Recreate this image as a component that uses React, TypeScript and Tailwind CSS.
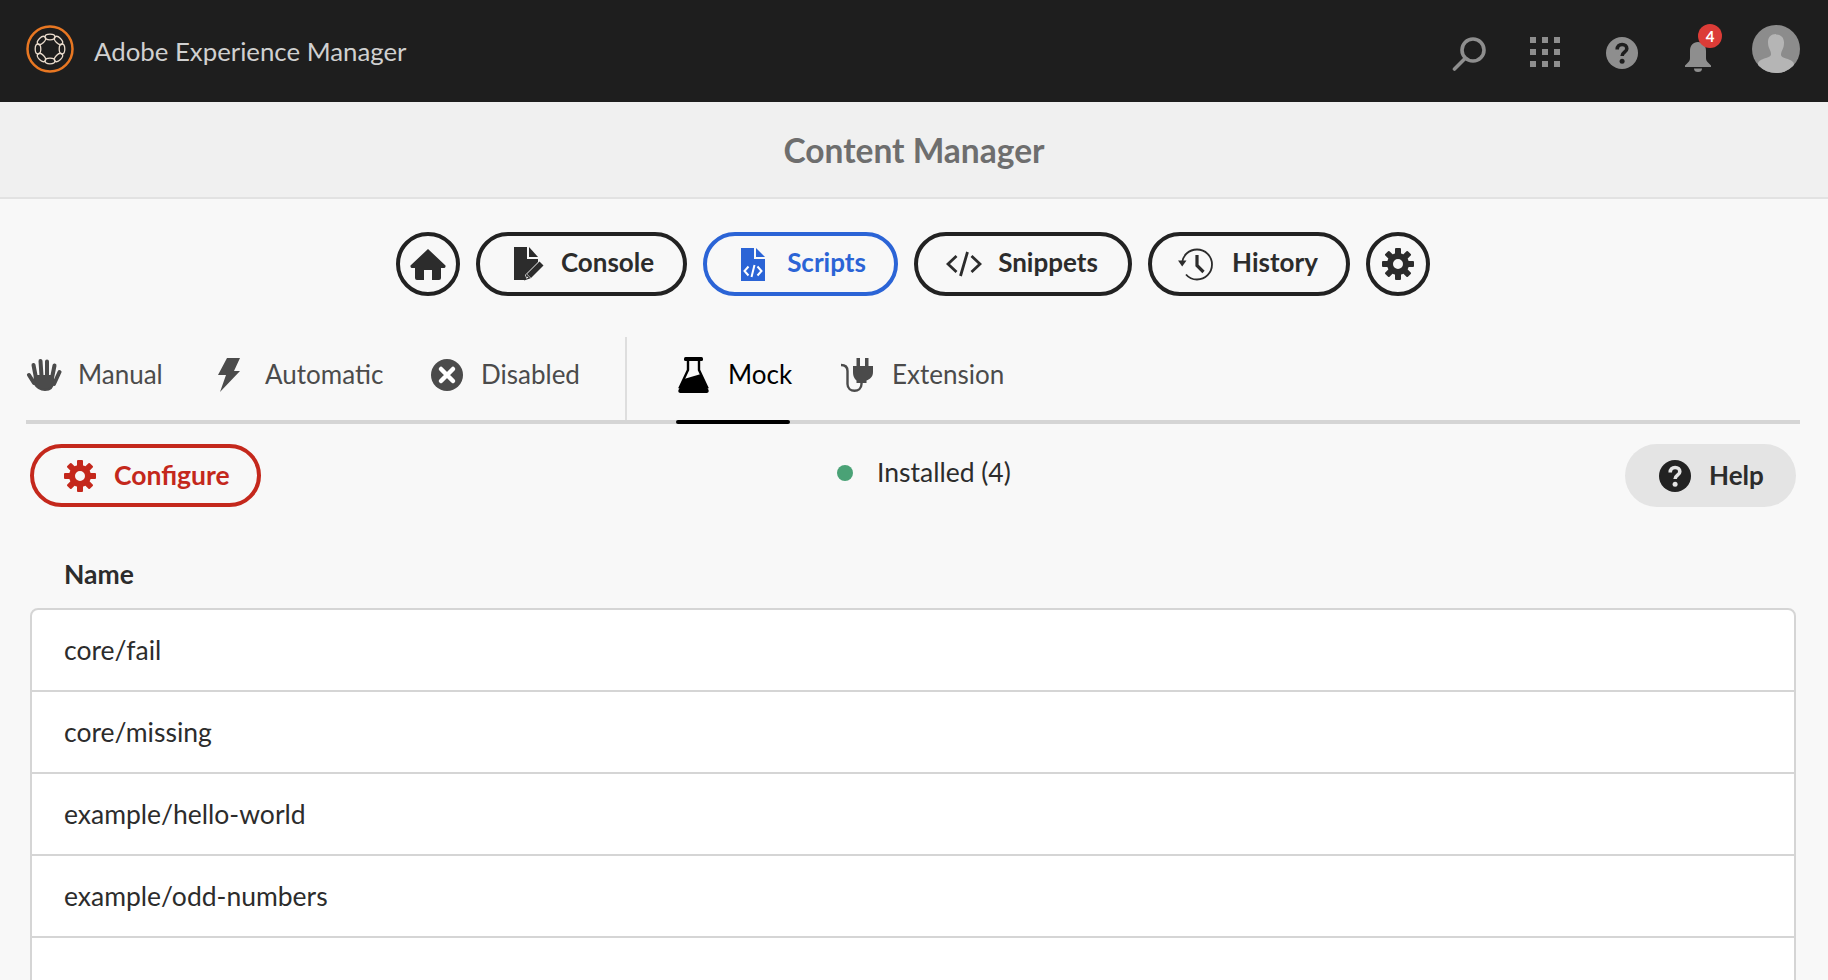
import { ReactNode } from "react";

const rows = ["core/fail", "core/missing", "example/hello-world", "example/odd-numbers", ""];

const Gear = ({ className = "" }: { className?: string }) => (
  <svg viewBox="0 0 32 32" className={className} fill="currentColor">
    <path fillRule="evenodd" d="M16 5a11 11 0 1 0 0 22 11 11 0 0 0 0-22zm0 6a5 5 0 1 1 0 10 5 5 0 0 1 0-10z" />
    {[0, 45, 90, 135, 180, 225, 270, 315].map((a) => (
      <rect key={a} x="13" y="0" width="6" height="7" rx="1" transform={`rotate(${a} 16 16)`} />
    ))}
  </svg>
);

const Logo = () => (
  <svg viewBox="0 0 48 48" className="w-12 h-12" fill="none">
    <circle cx="24" cy="24" r="22.5" stroke="#e87722" strokeWidth="2.5" />
    {[0, 45, 90, 135, 180, 225, 270, 315].map((a) => (
      <ellipse key={a} cx="24" cy="12" rx="5" ry="2.8" stroke="#eadccd" strokeWidth="1.3" transform={`rotate(${a} 24 24)`} />
    ))}
  </svg>
);

const Search = () => (
  <svg viewBox="0 0 34 34" className="w-[34px] h-[34px]" fill="none" stroke="#8e8e8e" strokeWidth="3.6" strokeLinecap="round">
    <circle cx="21" cy="13" r="11" />
    <path d="M13 21.5L2.5 32" />
  </svg>
);

const Apps = () => (
  <svg viewBox="0 0 30 30" className="w-[30px] h-[30px]" fill="#8e8e8e">
    {[0, 12, 24].flatMap((y) => [0, 12, 24].map((x) => <rect key={`${x}-${y}`} x={x} y={y} width="6" height="6" />))}
  </svg>
);

const HelpIcon = ({ bg, fg, className }: { bg: string; fg: string; className: string }) => (
  <svg viewBox="0 0 32 32" className={className}>
    <circle cx="16" cy="16" r="16" fill={bg} />
    <path d="M11.2 12.4c0-3 2-4.9 4.9-4.9 2.8 0 4.7 1.7 4.7 4.2 0 3.4-4.7 3.6-4.7 7.2" fill="none" stroke={fg} strokeWidth="3.6" />
    <circle cx="16.1" cy="24.2" r="2.5" fill={fg} />
  </svg>
);

const Bell = () => (
  <svg viewBox="0 0 28 31" className="w-7 h-[31px]" fill="#8e8e8e">
    <path d="M14 1C9 1 6 4.500 6 10v7c0 2-.6 3-2 4.500L1 24.500V26h26v-1.500l-3-3c-1.400-1.500-2-2.500-2-4.500v-7c0-5.500-3-9-8-9z" />
    <path d="M10 27.500h8a4 3.500 0 0 1-8 0z" />
  </svg>
);

const Avatar = () => (
  <svg viewBox="0 0 48 48" className="w-12 h-12">
    <clipPath id="avatar-clip">
      <circle cx="24" cy="24" r="24" />
    </clipPath>
    <g clipPath="url(#avatar-clip)">
      <rect width="48" height="48" fill="#8c8c8c" />
      <path fill="#b5b5b5" d="M24 9c-5 0-8 3-8 8 0 3 .5 5 1.500 7 1 2 1.500 3.500 1.500 5.500 0 1.500-2 2.500-5 3.500-5 1.500-8 3-8 6V48h36v-8.500c0-3-3-4.500-8-6-3-1-5-2-5-3.500 0-2 .5-3.500 1.500-5.500s1.500-4 1.500-7c0-5-3-8-8-8z" />
    </g>
  </svg>
);

const Home = () => (
  <svg viewBox="0 0 36 31" className="w-9 h-[31px]" fill="currentColor">
    <path d="M18 0l17.500 16.500v1.500l-1 1H31v10a2 2 0 0 1-2 2h-7V21h-8v10H7a2 2 0 0 1-2-2V19H1.500l-1-1v-1.500z" />
  </svg>
);

const ConsoleIcon = () => (
  <svg viewBox="0 0 30 34" className="w-[30px] h-[34px]" fill="currentColor">
    <path d="M0 0h13v12h11v3L11 28v5H0z" />
    <path d="M15 0l9 10h-9z" />
    <path d="M25.500 14.500l4 4L17 31l-4-4z" />
    <path d="M12.500 28l3 3-4.500 1.500z" fill="none" stroke="currentColor" strokeWidth="1.200" />
  </svg>
);

const ScriptIcon = () => (
  <svg viewBox="0 0 24 33" className="w-6 h-[33px]" fill="currentColor">
    <path d="M0 0h13v11h11v22H0z" />
    <path d="M15 0l9 9h-9z" />
    <path d="M7.500 18.500L3.500 23l4 4.500M16.500 18.500l4 4.500-4 4.500M13.500 17l-3 12" fill="none" stroke="#fff" strokeWidth="2" />
  </svg>
);

const CodeIcon = () => (
  <svg viewBox="0 0 36 26" className="w-9 h-[26px]" fill="none" stroke="currentColor" strokeWidth="2.800">
    <path d="M10.500 5L2 13l8.500 8M25.500 5L34 13l-8.500 8M21.500 1l-7 24" />
  </svg>
);

const HistoryIcon = () => (
  <svg viewBox="0 0 35 33" className="w-[35px] h-[33px]" fill="none" stroke="currentColor">
    <path d="M4 15C5 7 11 1.500 19 1.500a15 15 0 1 1 0 30c-4.500 0-8.500-2-11-5" strokeWidth="1.800" />
    <path d="M0 12.500h8.500L4.200 18.500z" fill="currentColor" stroke="none" />
    <path d="M19 7v10.500l6.500 6.500" strokeWidth="3.200" />
  </svg>
);

const Hand = () => (
  <svg viewBox="0 0 36 34" className="w-9 h-[34px]" fill="currentColor" stroke="currentColor" strokeLinecap="round" strokeWidth="4">
    <path d="M10 20L7.500 7M15.500 18L14.500 3M21 18V3.500M26 20l2.500-12.500" fill="none" />
    <path d="M3 17l5 8M33.500 14L28 26" fill="none" />
    <path d="M9 18h18v6c0 5-3 8-8 8s-8-2-11-7z" strokeWidth="2" />
  </svg>
);

const Bolt = () => (
  <svg viewBox="0 0 22 34" className="w-[22px] h-[34px]" fill="currentColor">
    <path d="M9 0h13l-6 13h6L2 34l6-17H0z" />
  </svg>
);

const XCircle = () => (
  <svg viewBox="0 0 32 32" className="w-8 h-8">
    <circle cx="16" cy="16" r="16" fill="currentColor" />
    <path d="M10 10l12 12M22 10L10 22" stroke="#fff" strokeWidth="4.500" strokeLinecap="round" />
  </svg>
);

const Flask = () => (
  <svg viewBox="0 0 31 36" className="w-[31px] h-9" fill="currentColor">
    <rect x="6" y="0" width="19" height="4" rx="1.500" />
    <path d="M10 3v10L2 30h27l-8-17V3" fill="none" stroke="currentColor" strokeWidth="2.400" />
    <path d="M6 22l17-5 7.500 16c.6 1.500-.2 3-2 3H2.500c-1.800 0-2.600-1.500-2-3z" />
  </svg>
);

const Plug = () => (
  <svg viewBox="0 0 32 34" className="w-8 h-[34px]" fill="currentColor">
    <path d="M0 7c4 0 6.500 2 6.500 6v13c0 9 14 9 14 0v-4" fill="none" stroke="currentColor" strokeWidth="2.400" />
    <rect x="15.500" y="0" width="3.500" height="9" />
    <rect x="24" y="0" width="3.500" height="9" />
    <path d="M12 8h20v6c0 5-3 7-6.500 8.500V25h-10v-2.500C14 21 12 19 12 14z" />
  </svg>
);

function NavPill({ icon, label, className, iconGap }: { icon: ReactNode; label: string; className: string; iconGap: string }) {
  return (
    <button className={`flex h-16 items-center justify-center rounded-full border-4 font-bold text-[26px] ${className}`}>
      {icon}
      <span className={`pb-[3px] ${iconGap}`}>{label}</span>
    </button>
  );
}

function Tab({ icon, label, className, iconClass, textClass = "text-[#4b4b4b]" }: { icon: ReactNode; label: string; className: string; iconClass: string; textClass?: string }) {
  return (
    <div className={`relative flex h-full items-center pb-2 ${className}`}>
      <div className={`flex items-center ${iconClass}`}>{icon}</div>
      <span className={`text-[26px] ${textClass}`}>{label}</span>
    </div>
  );
}

export default function App() {
  return (
    <div className="h-[980px] overflow-hidden bg-[#f8f8f8] text-[#2c2c2c] font-['Lato','Open_Sans',sans-serif]">
      <header className="flex h-[102px] items-center bg-[#1e1e1e] pl-[26px] pr-[28px]">
        <div className="mb-1"><Logo /></div>
        <span className="ml-5 text-[25.800px] text-[#d0d0d0]">Adobe Experience Manager</span>
        <div className="ml-auto flex h-full items-start">
          <div className="mt-[37px]"><Search /></div>
          <div className="ml-[44px] mt-[37px]"><Apps /></div>
          <div className="ml-[46px] mt-[37px]"><HelpIcon bg="#8e8e8e" fg="#1e1e1e" className="w-8 h-8" /></div>
          <div className="relative ml-[46px] mt-[41px]">
            <Bell />
            <span className="absolute -right-[10px] -top-[17px] flex h-6 w-6 items-center justify-center rounded-full bg-[#dc3c37] text-[15px] font-bold text-white">4</span>
          </div>
          <div className="ml-10 mt-[25px]"><Avatar /></div>
        </div>
      </header>

      <div className="flex h-[97px] items-center justify-center border-b-2 border-[#e2e2e2] bg-[#f0f0f0] pt-[2px]">
        <h1 className="text-[33.500px] font-bold text-[#6e6e6e]">Content Manager</h1>
      </div>

      <nav className="mt-[33px] flex justify-center gap-4 pr-[2px]">
        <button className="flex h-16 w-16 items-center justify-center rounded-full border-4 border-[#222]"><Home /></button>
        <NavPill icon={<ConsoleIcon />} label="Console" iconGap="ml-[17px]" className="w-[211px] border-[#222] pl-[5px]" />
        <NavPill icon={<ScriptIcon />} label="Scripts" iconGap="ml-[22px]" className="w-[195px] border-[#2b64d6] pl-[6px] text-[#2b64d6]" />
        <NavPill icon={<CodeIcon />} label="Snippets" iconGap="ml-4" className="w-[218px] border-[#222] pr-[2px]" />
        <NavPill icon={<HistoryIcon />} label="History" iconGap="ml-[19px]" className="w-[202px] border-[#222] pr-[2px]" />
        <button className="flex h-16 w-16 items-center justify-center rounded-full border-4 border-[#222]"><Gear className="h-8 w-8" /></button>
      </nav>

      <div className="mx-[26px] mr-[28px] mt-[41px] flex h-[87px] border-b-4 border-[#d5d5d5] text-[#4b4b4b]">
        <Tab icon={<Hand />} label="Manual" className="w-[192px]" iconClass="w-[52px]" />
        <Tab icon={<Bolt />} label="Automatic" className="w-[213px]" iconClass="w-[47px]" />
        <Tab icon={<XCircle />} label="Disabled" className="w-[196px] border-r-2 border-[#dedede]" iconClass="w-[50px]" />
        <Tab
          icon={<div className="text-black"><Flask /></div>}
          label="Mock"
          className="ml-[49px] w-[165px]"
          iconClass="w-[52px] pl-[2px]"
          textClass="text-black"
        />
        <Tab icon={<Plug />} label="Extension" className="" iconClass="w-[51px]" />
        <div className="absolute left-[676px] top-[420px] h-1 w-[114px] rounded-sm bg-black" />
      </div>

      <div className="mx-[30px] mr-[32px] mt-5 flex items-start">
        <button className="flex h-[63px] w-[231px] items-center rounded-full border-4 border-[#c4281c] pl-[30px] text-[26.500px] font-bold text-[#c4281c]">
          <Gear className="h-8 w-8" />
          <span className="ml-[18px]">Configure</span>
        </button>
        <div className="ml-[576px] flex h-[57px] items-center">
          <span className="h-4 w-4 rounded-full bg-[#4aa276]" />
          <span className="ml-[24px] pt-[1px] text-[26.500px]">Installed (4)</span>
        </div>
        <button className="ml-auto flex h-[63px] w-[171px] items-center rounded-full bg-[#e4e4e4] pl-[34px] text-[26px] font-bold">
          <HelpIcon bg="#222" fg="#e4e4e4" className="h-8 w-8" />
          <span className="ml-[18px]">Help</span>
        </button>
      </div>

      <div className="mx-[30px] mr-[32px]">
        <div className="flex h-[101px] items-center pl-[34px] pt-[34px] text-[26.500px] font-bold leading-none">Name</div>
        <div className="rounded-t-lg border-2 border-[#d5d5d5] bg-white">
          {rows.map((r, i) => (
            <div key={i} className="flex h-[82px] items-center border-b-2 border-[#d5d5d5] pl-8 pt-[2px] text-[26.500px]">{r}</div>
          ))}
        </div>
      </div>
    </div>
  );
}
